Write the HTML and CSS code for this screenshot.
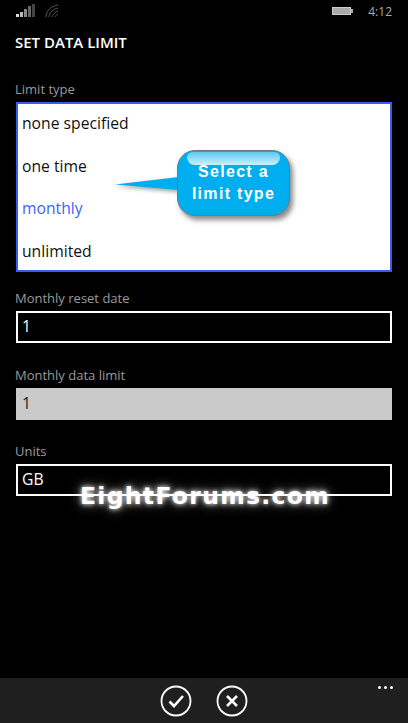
FILE: index.html
```html
<!DOCTYPE html>
<html lang="en">
<head>
<meta charset="utf-8">
<title>Set data limit</title>
<link rel="stylesheet" href="styles.css">
</head>
<body>
<div class="phone">
  <div class="status">
    <svg class="signal" width="22" height="14" viewBox="0 0 22 14"><rect x="0" y="10" width="3" height="3" fill="#ddd"/><rect x="4" y="8" width="3" height="5" fill="#bbb"/><rect x="8" y="5" width="3" height="8" fill="#888"/><rect x="12" y="2" width="3" height="11" fill="#666"/><rect x="16" y="0" width="3" height="13" fill="#444"/></svg>
    <svg class="wifi" width="14" height="14" viewBox="0 0 14 14" fill="none" stroke="#555" stroke-width="1"><path d="M1 13C1 7 6 2 13 1"/><path d="M4 13C4 9 8 5 13 4"/><path d="M7 13C7 11 10 8 13 7"/><path d="M10 13C10 12 12 11 13 10"/></svg>
    <span class="spacer"></span>
    <span class="battery"><span class="batt-body"></span><span class="batt-tip"></span></span>
    <span class="clock">4:12</span>
  </div>
  <main class="content">
    <h1 class="title">SET DATA LIMIT</h1>
    <label class="label first">Limit type</label>
    <ul class="list">
      <li class="item">none specified</li>
      <li class="item">one time</li>
      <li class="item selected">monthly</li>
      <li class="item">unlimited</li>
    </ul>
    <label class="label after-list">Monthly reset date</label>
    <div class="field">1</div>
    <label class="label">Monthly data limit</label>
    <div class="field disabled">1</div>
    <label class="label">Units</label>
    <div class="field">GB</div>
  </main>
  <footer class="appbar">
    <svg class="action" width="32" height="32" viewBox="0 0 32 32" fill="none" stroke="#fff"><circle cx="16" cy="16" r="14.5" stroke-width="1.8"/><path d="M9.500 16.500l4.500 4.500 9-10" stroke-width="2.600"/></svg>
    <svg class="action" width="32" height="32" viewBox="0 0 32 32" fill="none" stroke="#fff"><circle cx="16" cy="16" r="14.5" stroke-width="1.8"/><path d="M11 11l10 10M21 11l-10 10" stroke-width="2.600"/></svg>
    <span class="dots"><i></i><i></i><i></i></span>
  </footer>
  <div class="callout">
    <svg class="tail" width="64" height="16" viewBox="0 0 64 16"><path d="M0 7.500L64 0V13Z" fill="#00aeef"/></svg>
    <div class="bubble"><span class="gloss"></span>Select a<br>limit type</div>
  </div>
  <div class="watermark">EightForums.com</div>
</div>
</body>
</html>
```
FILE: styles.css
```css
* { box-sizing: border-box; }
html, body { margin: 0; padding: 0; background: #000; }
.phone {
  position: relative;
  width: 408px;
  height: 723px;
  display: flex;
  flex-direction: column;
  overflow: hidden;
  background: #000;
  font-family: "Open Sans", "Noto Sans", sans-serif;
  color: #fff;
}
.status {
  height: 24px;
  padding: 4px 16px 0 16px;
  display: flex;
  align-items: flex-start;
  gap: 7px;
}
.spacer { flex: 1; }
.battery { display: flex; align-items: center; margin: 3px 8px 0 0; }
.batt-body { width: 19px; height: 8px; background: #aaa; border: 1px solid #ccc; }
.batt-tip { width: 2px; height: 4px; background: #aaa; }
.clock { font-size: 12px; line-height: 16px; color: #aaa; }
.content { flex: 1; padding: 0 16px; display: flex; flex-direction: column; }
.title { margin: 8px 0 0 -1px; height: 20px; font-size: 15px; line-height: 20px; font-weight: 600; }
.label { display: block; height: 20px; margin: 21.500px 0 3px -1px; font-size: 13px; line-height: 20px; color: #9a9a9a; }
.label.first { margin-top: 27px; margin-bottom: 3px; }
.label.after-list { margin-top: 16px; }
.list {
  margin: 0;
  padding: 0;
  list-style: none;
  height: 170px;
  background: #fff;
  border: 2px solid #3a5bf0;
}
.item { height: 42.700px; padding: 0 4px; font-size: 15.700px; line-height: 39px; color: #111; }
.item.selected { color: #3d63f5; }
.field {
  height: 32px;
  padding: 0 4px;
  border: 2px solid #fff;
  font-size: 15.700px;
  line-height: 27px;
  color: #fff;
}
.field.disabled { background: #cacaca; border-color: #cacaca; color: #222; }
.appbar {
  position: relative;
  height: 45px;
  background: #1f1f1f;
  display: flex;
  justify-content: center;
  gap: 24px;
  padding: 7px 1px 0 0;
}
.action { display: block; }
.dots { position: absolute; right: 15px; top: 8px; display: flex; gap: 3px; }
.dots i { width: 3px; height: 3px; background: #fff; border-radius: 50%; }
.callout { position: absolute; left: 115px; top: 150px; }
.tail { position: absolute; left: 0; top: 27px; filter: drop-shadow(0 2px 2px rgba(120,120,120,.7)); }
.bubble {
  position: relative;
  margin-left: 62px;
  width: 113px;
  height: 66px;
  padding-top: 10px;
  background: #00aeef;
  border: 1px solid #777;
  border-radius: 18px;
  box-shadow: 3px 4px 5px rgba(90,90,90,.7);
  font-family: "Liberation Sans", Arial, sans-serif;
  font-size: 16px;
  font-weight: 700;
  line-height: 22px;
  letter-spacing: 1.300px;
  text-align: center;
}
.gloss {
  position: absolute;
  left: 9px;
  right: 9px;
  top: 1px;
  height: 13px;
  border-radius: 7px 7px 10px 10px;
  background: linear-gradient(#5cc9f3, #cdf0fb);
}
.watermark {
  position: absolute;
  left: 80px;
  top: 481px;
  font-family: "DejaVu Sans", sans-serif;
  font-size: 23.500px;
  font-weight: 700;
  line-height: 30px;
  letter-spacing: 1.300px;
  color: #fff;
  text-shadow: 0 0 5px #fff, 0 0 12px rgba(255,255,255,.7);
}
```
